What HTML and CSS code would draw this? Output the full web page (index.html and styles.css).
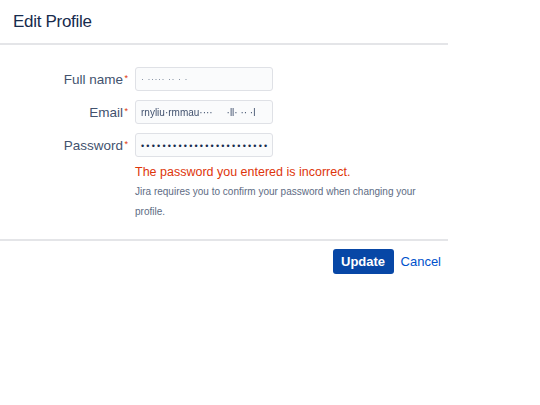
FILE: index.html
```html
<!DOCTYPE html>
<html>
<head>
<meta charset="utf-8">
<link rel="stylesheet" href="styles.css">
</head>
<body>
<div class="dialog">
  <header class="head"><h1 class="title">Edit Profile</h1></header>
  <form class="body">
    <div class="row">
      <label class="label">Full name<span class="req">*</span></label>
      <div class="input"><span class="blur">· ····· ·· · ·</span></div>
    </div>
    <div class="row">
      <label class="label">Email<span class="req">*</span></label>
      <div class="input"><span class="blur dark">rnyliu·rmmau···· &nbsp;&nbsp;&nbsp;&nbsp;·ll· ·· ·l</span></div>
    </div>
    <div class="row">
      <label class="label">Password<span class="req">*</span></label>
      <div class="input"><span class="dots">••••••••••••••••••••••••</span></div>
    </div>
    <div class="row">
      <div></div>
      <div class="msgs">
        <p class="error">The password you entered is incorrect.</p>
        <p class="help">Jira requires you to confirm your password when changing your profile.</p>
      </div>
    </div>
  </form>
  <footer class="foot">
    <button class="btn" type="button">Update</button>
    <a class="cancel">Cancel</a>
  </footer>
</div>
</body>
</html>
```

FILE: styles.css
```css
html, body { margin: 0; background: #fff; }
body { font-family: "Liberation Sans", Arial, sans-serif; color: #172b4d; }
.dialog { width: 448px; }
.head { height: 43px; border-bottom: 2px solid #e4e5e8; display: flex; align-items: center; padding-left: 13px; }
.title { margin: 0; font-size: 17px; font-weight: 400; color: #172b4d; padding-top: 1px; letter-spacing: -0.3px; }
.body { padding: 22px 0 17px; border-bottom: 2px solid #e4e5e8; display: flex; flex-direction: column; gap: 9px; }
.row { display: grid; grid-template-columns: 127px 138px; column-gap: 8px; align-items: center; }
.label { text-align: right; font-size: 13.5px; color: #42526e; padding-right: 4px; position: relative; }
.req { color: #de350b; font-size: 9px; position: absolute; right: -1px; top: 1px; }
.input { height: 22px; border: 1px solid #dfe1e6; border-radius: 3px; background: #fafbfc; display: flex; align-items: center; padding: 0 5px; overflow: hidden; white-space: nowrap; }
.blur { font-size: 9px; color: #7a869a; filter: blur(0.4px); letter-spacing: 0.5px; }
.blur.dark { color: #42526e; font-size: 10px; letter-spacing: 0; }
.dots { font-size: 9px; color: #172b4d; letter-spacing: 2.2px; padding-top: 1px; }
.msgs { grid-column: 2 / span 1; width: 320px; margin-top: -3px; }
.error { margin: 0; font-size: 12.5px; color: #de350b; line-height: 18px; }
.help { margin: 1px 0 0; font-size: 10px; color: #5e6c84; line-height: 20px; width: 300px; }
.foot { display: flex; justify-content: flex-end; align-items: center; gap: 7px; padding: 8px 7px 0 0; }
.btn { width: 61px; height: 25px; border: 0; border-radius: 3px; background: #0747a6; color: #fff; font-family: inherit; font-weight: 700; font-size: 13px; padding: 0; }
.cancel { color: #0052cc; font-size: 13px; }
```
